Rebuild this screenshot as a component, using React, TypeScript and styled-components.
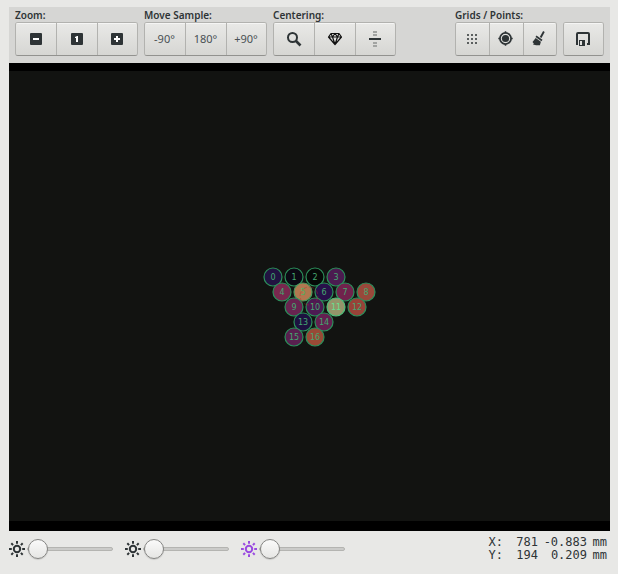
import React, { useState } from "react";
import styled, { createGlobalStyle } from "styled-components";

const ink = "#2e3436";

const GlobalStyle = createGlobalStyle`
  *, *::before, *::after { box-sizing: border-box; }
  body {
    margin: 0;
    background: #e8e8e6;
    color: ${ink};
    font-family: "Noto Sans", "Open Sans", sans-serif;
  }
`;

const Page = styled.main`
  display: flex;
  flex-direction: column;
  padding: 7px 8px 8px 9px;
`;

const Toolbar = styled.header`
  display: flex;
  gap: 6px;
  padding: 2px 6px 7px;
  background: #d6d6d4;
`;

const Group = styled.section<{ $end?: boolean }>`
  display: flex;
  flex-direction: column;
  justify-content: flex-end;
  margin-left: ${(p) => (p.$end ? "auto" : "0")};
`;

const GroupLabel = styled.h2`
  margin: 0;
  font-size: 10px;
  line-height: 13px;
  font-weight: 600;
  white-space: nowrap;
`;

const ButtonRow = styled.div`
  display: flex;
  height: 34px;
  border: 1px solid #b2b2af;
  border-bottom-color: #92928f;
  border-radius: 3px;
  overflow: hidden;
`;

const ToolButton = styled.button<{ $narrow?: boolean }>`
  display: flex;
  align-items: center;
  justify-content: center;
  width: ${(p) => (p.$narrow ? 34 : 41)}px;
  padding: 0 1px 0 0;
  border: 0;
  background: linear-gradient(#e9e9e7, #d6d6d3);
  box-shadow: inset 0 1px #f5f5f4;
  color: #4a5154;
  font: 11px "Noto Sans", "Open Sans", sans-serif;

  & + & { border-left: 1px solid #b2b2af; }
  &:first-child, &:last-child { width: ${(p) => (p.$narrow ? 33 : 40)}px; }
  &:only-child { width: 39px; }
  &:active { background: #c9c9c6; }
`;

const Caption = styled.span`
  padding-bottom: 2px;
`;

const Glyph = styled.svg`
  display: block;
  flex: none;
  width: 16px;
  height: 16px;
  overflow: visible;
`;

const Video = styled.div`
  padding: 8px 0 10px;
  background: #000;
`;

const Scene = styled.svg`
  display: block;
  width: 100%;
  background: #121311;
  font-family: "DejaVu Sans", sans-serif;
  font-size: 8px;
`;

const StatusBar = styled.footer`
  display: flex;
  align-items: flex-start;
  gap: 12px;
  padding: 5px 3px 0 0;
`;

const SliderLabel = styled.label<{ $color: string }>`
  display: flex;
  align-items: center;
  gap: 2px;
  height: 26px;
  color: ${(p) => p.$color};
`;

const Slider = styled.input`
  appearance: none;
  width: 86px;
  height: 20px;
  margin: 0;
  background: transparent;

  &::-webkit-slider-runnable-track {
    height: 4px;
    border: 1px solid #b4b4b1;
    border-radius: 2px;
    background: #cbcbc9;
  }
  &::-webkit-slider-thumb {
    appearance: none;
    width: 20px;
    height: 20px;
    margin-top: -9px;
    border: 1px solid #858583;
    border-radius: 50%;
    background: linear-gradient(#fafafa, #e6e6e4);
    box-shadow: 0 1px 1px #00000022;
  }
`;

const Position = styled.dl`
  display: grid;
  grid-template-columns: auto auto;
  column-gap: 14px;
  margin: 0 0 0 auto;
  font: 12px/13px "DejaVu Sans Mono", monospace;
`;

const Axis = styled.dt`
  margin: 0;
`;

const Reading = styled.dd`
  display: grid;
  grid-template-columns: 21px 43px 14px;
  column-gap: 6px;
  justify-items: end;
  margin: 0;
`;

const Minus = () => (
  <Glyph viewBox="0 0 16 16" aria-hidden>
    <rect x="2" y="2" width="12" height="12" rx="1" fill={ink} />
    <path d="M5 7h6v2H5z" fill="#fff" />
  </Glyph>
);

const One = () => (
  <Glyph viewBox="0 0 16 16" aria-hidden>
    <rect x="2" y="2" width="12" height="12" rx="1" fill={ink} />
    <path d="M6 6l2-1h1v6H7V7H6z" fill="#fff" />
  </Glyph>
);

const Plus = () => (
  <Glyph viewBox="0 0 16 16" aria-hidden>
    <rect x="2" y="2" width="12" height="12" rx="1" fill={ink} />
    <path d="M5 7h2V5h2v2h2v2H9v2H7V9H5z" fill="#fff" />
  </Glyph>
);

const Loupe = () => (
  <Glyph viewBox="0 0 16 16" fill="none" stroke={ink} aria-hidden>
    <circle cx="6.5" cy="6.5" r="4.5" strokeWidth="2" />
    <path d="M10 10l4.5 4.5" strokeWidth="2.6" />
  </Glyph>
);

const Diamond = () => (
  <Glyph viewBox="0 0 16 16" fill="none" stroke="#111" strokeWidth="1.2" strokeLinejoin="round" aria-hidden>
    <path d="M4 2.5h8L14.5 6 8 13.5 1.5 6zM1.5 6h13M4 2.5L5.5 6 8 13.5 10.5 6 12 2.5M5.5 6L8 2.5 10.5 6" />
  </Glyph>
);

const Align = () => (
  <Glyph viewBox="0 0 16 16" aria-hidden>
    <path d="M6 0h4v2H6zM6 3h4v2H6zM6 11h4v2H6zM6 14h4v2H6z" fill="#a2a4a2" />
    <path d="M2 7h12v2H2z" fill={ink} />
  </Glyph>
);

const Dots = () => (
  <Glyph viewBox="0 0 16 16" aria-hidden>
    {[3, 7, 11].map((y) =>
      [3, 7, 11].map((x) => <rect key={`${x}-${y}`} x={x} y={y} width="2" height="2" fill="#5b5f5f" />)
    )}
  </Glyph>
);

const Target = () => (
  <Glyph viewBox="0 0 16 16" fill="none" stroke={ink} aria-hidden>
    <circle cx="7.5" cy="7.5" r="5.6" strokeWidth="1.7" />
    <circle cx="7.5" cy="7.5" r="3.6" fill={ink} stroke="none" />
    <path d="M7.5 .3v2M7.5 12.7v2M.3 7.5h2M12.7 7.5h2" strokeWidth="1.5" />
  </Glyph>
);

const Broom = () => (
  <Glyph viewBox="0 0 16 16" fill={ink} aria-hidden>
    <path d="M11.1 0l1.6 1-3.2 6-1.7-1z" />
    <path d="M4.5 4.6l6 4.2-1 1.4-6-4.2z" />
    <path d="M3.7 7l5.2 3.8-1 3.4H4.1L1 13.4l.8-1L.5 11z" />
  </Glyph>
);

const Save = () => (
  <Glyph viewBox="0 0 16 16" fill="none" stroke={ink} aria-hidden>
    <path d="M3 13H2V3q0-1 1-1h10q1 0 1 1v10h-2" strokeWidth="2" />
    <path d="M3.5 15V8.5h7V15" stroke="#e0e0de" />
    <path d="M4 9h6v6H4z" fill={ink} stroke="none" />
    <path d="M5 10h2v4H5z" fill="#e0e0de" stroke="none" />
  </Glyph>
);

const Sun = () => (
  <Glyph viewBox="0 0 16 16" fill="none" stroke="currentColor" strokeWidth="2" aria-hidden>
    <circle cx="8" cy="8" r="3.2" />
    <path d="M8 0v2.8M8 13.2V16M0 8h2.8M13.2 8H16" />
    <path d="M2.3 2.3l1.8 1.8M11.9 11.9l1.8 1.8M2.3 13.7l1.8-1.8M11.9 4.1l1.8-1.8" />
  </Glyph>
);

interface Tool {
  name: string;
  face: React.ReactNode;
}

interface ToolGroupProps {
  label?: string;
  tools: Tool[];
  narrow?: boolean;
  end?: boolean;
}

const ToolGroup = ({ label, tools, narrow, end }: ToolGroupProps) => (
  <Group $end={end} aria-label={label ?? tools[0].name}>
    {label && <GroupLabel>{label}</GroupLabel>}
    <ButtonRow>
      {tools.map((t) => (
        <ToolButton key={t.name} type="button" aria-label={t.name} $narrow={narrow}>
          {t.face}
        </ToolButton>
      ))}
    </ButtonRow>
  </Group>
);

interface Point {
  x: number;
  y: number;
  fill: string;
  text?: string;
  ring?: string;
}

const points: Point[] = [
  { x: 264, y: 206, fill: "#211341" },
  { x: 285, y: 206, fill: "#0b0914" },
  { x: 306, y: 206, fill: "#060907" },
  { x: 327, y: 206, fill: "#4b1b50" },
  { x: 273, y: 221, fill: "#78284e" },
  { x: 294, y: 221, fill: "#b07850", text: "#52b060", ring: "#4c9a5e" },
  { x: 315, y: 221, fill: "#28104a" },
  { x: 336, y: 221, fill: "#70224c" },
  { x: 357, y: 221, fill: "#98483a" },
  { x: 285, y: 236, fill: "#682450" },
  { x: 306, y: 236, fill: "#4c1a52" },
  { x: 327, y: 236, fill: "#94946a", text: "#66e090", ring: "#50c07c" },
  { x: 348, y: 236, fill: "#984238" },
  { x: 294, y: 251, fill: "#1d1240" },
  { x: 315, y: 251, fill: "#642050" },
  { x: 285, y: 266, fill: "#58204f" },
  { x: 306, y: 266, fill: "#984a36" },
];

const lights = [
  { name: "Back light", color: ink },
  { name: "Front light", color: ink },
  { name: "UV light", color: "#9a4be0" },
];

const position = [
  { axis: "X:", pixel: "781", distance: "-0.883" },
  { axis: "Y:", pixel: "194", distance: "0.209" },
];

export default function App() {
  const [levels, setLevels] = useState([0, 0, 0]);

  return (
    <>
      <GlobalStyle />
      <Page>
        <Toolbar>
          <ToolGroup
            label="Zoom:"
            tools={[
              { name: "Zoom out", face: <Minus /> },
              { name: "Normal size", face: <One /> },
              { name: "Zoom in", face: <Plus /> },
            ]}
          />
          <ToolGroup
            label="Move Sample:"
            tools={["-90°", "180°", "+90°"].map((a) => ({ name: a, face: <Caption>{a}</Caption> }))}
          />
          <ToolGroup
            label="Centering:"
            tools={[
              { name: "Center loop", face: <Loupe /> },
              { name: "Center crystal", face: <Diamond /> },
              { name: "Align", face: <Align /> },
            ]}
          />
          <ToolGroup
            label="Grids / Points:"
            narrow
            end
            tools={[
              { name: "Grid", face: <Dots /> },
              { name: "Add point", face: <Target /> },
              { name: "Clear", face: <Broom /> },
            ]}
          />
          <ToolGroup tools={[{ name: "Save", face: <Save /> }]} />
        </Toolbar>

        <Video>
          <Scene viewBox="0 0 601 450" role="img" aria-label="Sample view">
            {points.map((p, i) => (
              <circle
                key={i}
                cx={p.x}
                cy={p.y}
                r="9"
                fill={p.fill}
                stroke={p.ring ?? "#2c8f5b"}
                strokeWidth="1.2"
              />
            ))}
            <circle
              cx="300"
              cy="225"
              r="9"
              fill="none"
              stroke="#b82b2b"
              strokeOpacity="0.4"
              strokeDasharray="5 2"
            />
            {points.map((p, i) => (
              <text key={i} x={p.x} y={p.y + 3} textAnchor="middle" fill={p.text ?? "#45a870"}>
                {i}
              </text>
            ))}
          </Scene>
        </Video>

        <StatusBar>
          {lights.map((light, i) => (
            <SliderLabel key={light.name} $color={light.color}>
              <Sun />
              <Slider
                type="range"
                min={0}
                max={100}
                aria-label={light.name}
                value={levels[i]}
                onChange={(e) => {
                  const value = Number(e.target.value);
                  setLevels((old) => old.map((v, j) => (j === i ? value : v)));
                }}
              />
            </SliderLabel>
          ))}
          <Position>
            {position.map((p) => (
              <React.Fragment key={p.axis}>
                <Axis>{p.axis}</Axis>
                <Reading>
                  <span>{p.pixel}</span>
                  <span>{p.distance}</span>
                  <span>mm</span>
                </Reading>
              </React.Fragment>
            ))}
          </Position>
        </StatusBar>
      </Page>
    </>
  );
}
